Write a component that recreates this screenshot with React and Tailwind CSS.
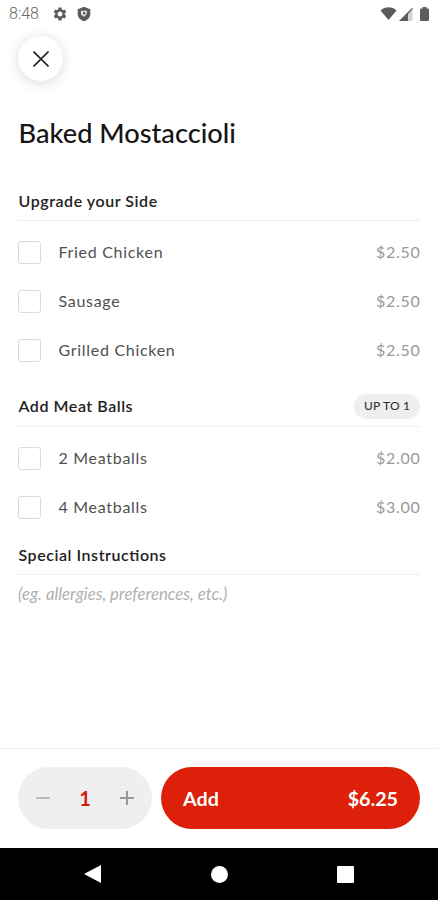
import { useState } from 'react';
import { MdSettings } from 'react-icons/md';

const SECTIONS = [
  {
    title: 'Upgrade your Side',
    options: [
      { name: 'Fried Chicken', price: '$2.50' },
      { name: 'Sausage', price: '$2.50' },
      { name: 'Grilled Chicken', price: '$2.50' }
    ]
  },
  {
    title: 'Add Meat Balls',
    badge: 'UP TO 1',
    options: [
      { name: '2 Meatballs', price: '$2.00' },
      { name: '4 Meatballs', price: '$3.00' }
    ]
  }
];

function StatusBar() {
  return (
    <div className="h-7 pl-[9px] pr-2 flex items-center justify-between text-[#5c5c5c]">
      <div className="flex items-center">
        <span className="w-[43px] font-['Roboto',sans-serif] text-[16px] leading-7 font-light text-[#666]">8:48</span>
        <MdSettings className="h-4 w-4" />
        <svg className="ml-2 h-4 w-4" viewBox="0 0 16 16">
          <path d="M8 .8 14.300 3.200V8c0 3.300-2.500 6-6.300 7.300C4.200 14 1.700 11.300 1.700 8V3.200Z" fill="currentColor" />
          <path d="M5 4.800h5.800v3.200L8 10.800 5 8.500Z" fill="#e8e8e8" />
          <path d="M7 5.300 10.300 7.300 7 9Z" fill="currentColor" />
        </svg>
      </div>
      <svg className="h-4 w-[50px]" viewBox="0 0 50 16">
        <path d="M.5 4.500C5 .3 12 .3 16.500 4.500L8.500 14Z" fill="currentColor" />
        <path d="M32.500 1.500V15H19Z" fill="#d2d2d2" />
        <path d="M28 6v9h-9Z" fill="currentColor" />
        <path d="m28 6 4.500-4.500V3L28 8Z" fill="currentColor" />
        <path d="M42.500 1h4v1.500H48q1 0 1 1V14q0 1-1 1h-7q-1 0-1-1V3.500q0-1 1-1h1.500Z" fill="currentColor" />
      </svg>
    </div>
  );
}

function OptionRow({ option, checked, onToggle }) {
  return (
    <button onClick={onToggle} className="h-[49px] w-full flex items-center text-left">
      <span
        className={`h-[23px] w-[23px] rounded-[3px] border ${
          checked ? 'border-[#dc2009] bg-[#dc2009]' : 'border-[#dadada] bg-white'
        }`}
      />
      <span className="ml-[17.5px] flex-1 pb-px text-base tracking-[0.7px] text-[#505050]">{option.name}</span>
      <span className="-mr-[0.5px] pb-px text-base tracking-[0.7px] text-[#999]">{option.price}</span>
    </button>
  );
}

function SectionHeader({ title, badge }) {
  return (
    <div className="h-10 flex items-center justify-between border-b border-[#efefef]">
      <h2
        className={`pl-[0.5px] text-base font-semibold tracking-[0.55px] text-[#222] [font-feature-settings:'liga'] ${
          badge ? 'pb-px' : ''
        }`}
      >
        {title}
      </h2>
      {badge && (
        <span className="h-[25px] w-[66px] pb-px flex items-center justify-center rounded-full bg-[#efefef] text-xs font-medium tracking-[0.2px] text-[#333]">
          {badge}
        </span>
      )}
    </div>
  );
}

export default function App() {
  const [selected, setSelected] = useState({});
  const [quantity, setQuantity] = useState(1);

  const toggle = (name) => setSelected({ ...selected, [name]: !selected[name] });

  return (
    <div className="h-[900px] w-full flex flex-col overflow-hidden bg-white font-['Lato',sans-serif]">
      <StatusBar />

      <main className="flex-1 px-[18px] pt-2">
        <button
          aria-label="Close"
          className="h-[45px] w-[45px] flex items-center justify-center rounded-full bg-white shadow-[0_2px_14px_rgba(0,0,0,0.15)]"
        >
          <svg className="h-4 w-4" viewBox="0 0 16 16" stroke="#222" strokeWidth="1.6">
            <path d="m.5.5 15 15M15.500.5l-15 15" />
          </svg>
        </button>

        <h1 className="mt-8 pl-[0.5px] text-[27.2px] leading-10 font-medium text-[#151515]">Baked Mostaccioli</h1>

        {/* Modifiers */}
        <div className="mt-7">
          {SECTIONS.map((section) => (
            <section key={section.title} className="pb-3 last:pb-[3px]">
              <SectionHeader title={section.title} badge={section.badge} />
              <div className="pt-[7px]">
                {section.options.map((option) => (
                  <OptionRow
                    key={option.name}
                    option={option}
                    checked={!!selected[option.name]}
                    onToggle={() => toggle(option.name)}
                  />
                ))}
              </div>
            </section>
          ))}
        </div>

        {/* Special instructions */}
        <SectionHeader title="Special Instructions" />
        <input
          className="h-9 w-full text-[16.8px] italic outline-none placeholder:text-[#b0b0b0]"
          placeholder="(eg. allergies, preferences, etc.)"
        />
      </main>

      {/* Order bar */}
      <footer className="h-[100px] px-[18px] pt-[18px] flex gap-[9px] border-t border-[#efefef]">
        <div className="h-[62px] w-[134px] px-[18px] flex items-center justify-between rounded-full bg-[#efefef]">
          <button aria-label="Decrease" onClick={() => setQuantity(Math.max(1, quantity - 1))}>
            <svg className="h-[14px] w-[14px]" viewBox="0 0 14 14" stroke="#bbb" strokeWidth="2">
              <path d="M0 7h14" />
            </svg>
          </button>
          <span className="text-xl font-bold text-[#d51b12]">{quantity}</span>
          <button aria-label="Increase" onClick={() => setQuantity(quantity + 1)}>
            <svg className="h-[14px] w-[14px]" viewBox="0 0 14 14" stroke="#999" strokeWidth="2">
              <path d="M0 7h14M7 0v14" />
            </svg>
          </button>
        </div>
        <button className="h-[62px] flex-1 px-[22px] pt-px flex items-center justify-between rounded-full bg-[#dc2009] text-[19.7px] font-bold text-white">
          <span>Add</span>
          <span>$6.25</span>
        </button>
      </footer>

      {/* Android navigation */}
      <nav className="h-[52px] flex items-center justify-center gap-[109px] bg-black">
        <svg className="h-[18px] w-[18px]" viewBox="0 0 18 18" fill="#fff">
          <path d="M17 0v18L0 9Z" />
        </svg>
        <span className="h-[17px] w-[17px] rounded-full bg-white" />
        <span className="h-[17px] w-[17px] rounded-[1px] bg-white" />
      </nav>
    </div>
  );
}
